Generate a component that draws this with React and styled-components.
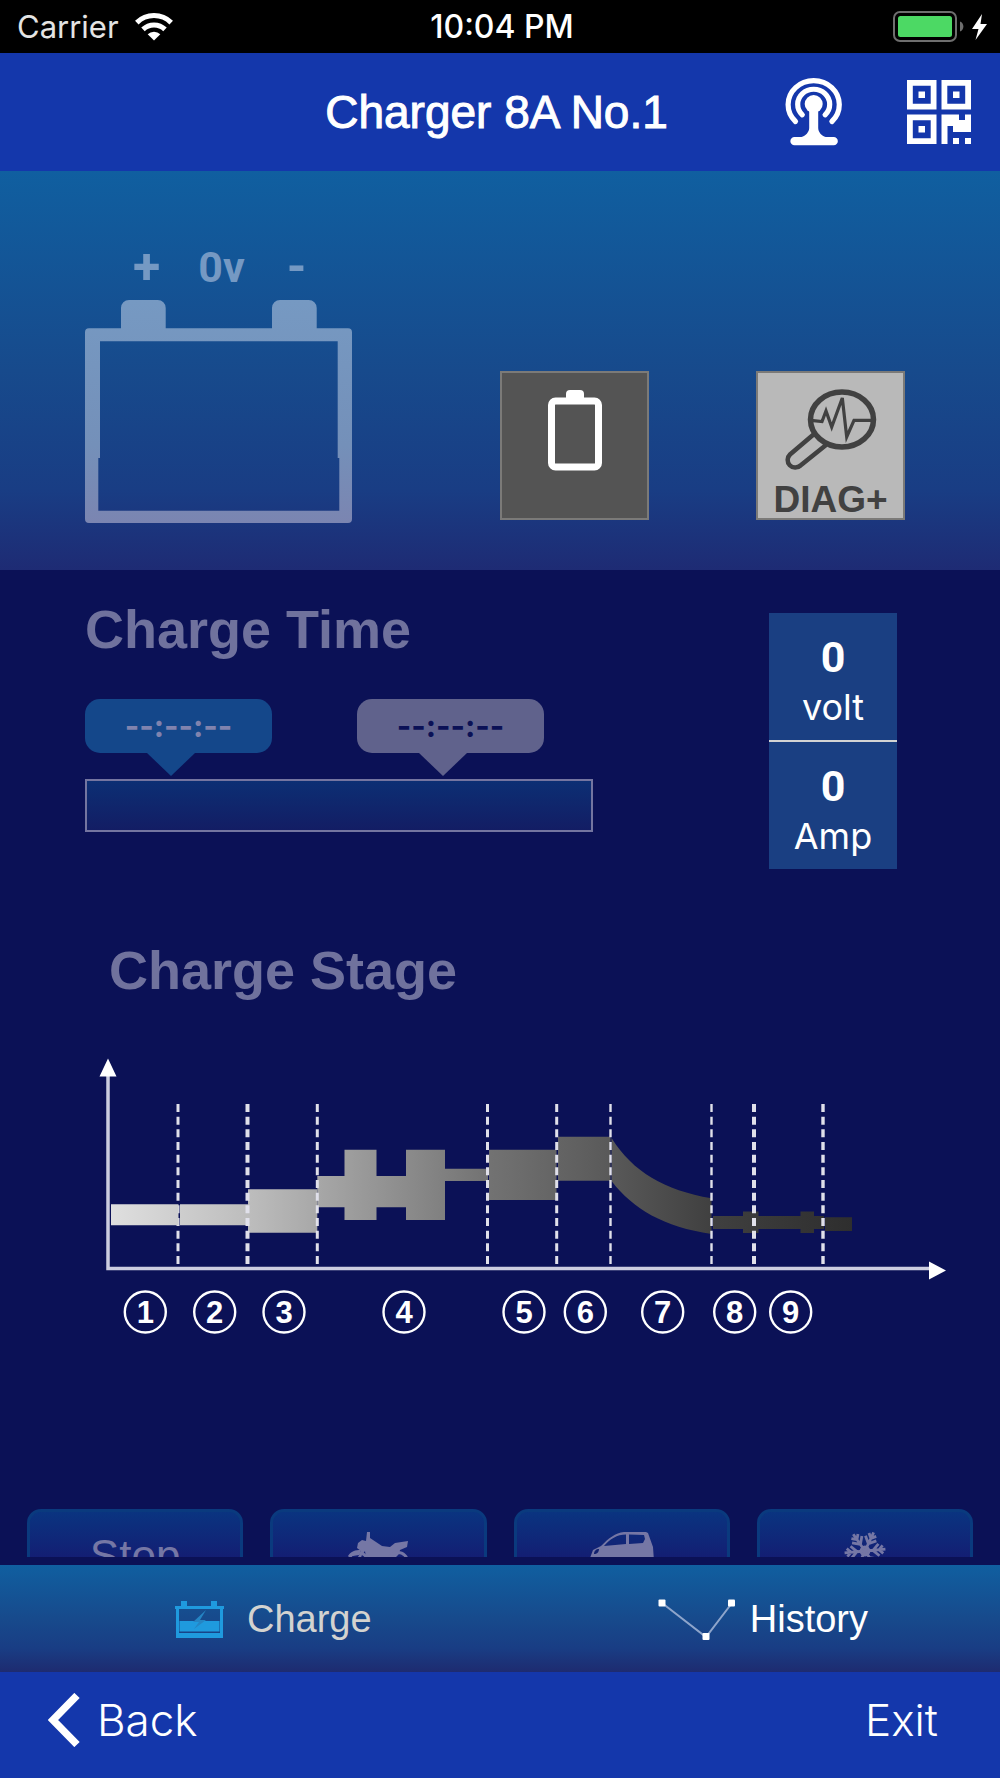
import styled, { createGlobalStyle } from "styled-components";

const GlobalStyle = createGlobalStyle`
  * {
    box-sizing: border-box;
  }

  body {
    margin: 0;
    background: #0b1156;
    font-family: "Liberation Sans", Arial, sans-serif;
  }

  button {
    padding: 0;
    border: 0;
    background: none;
    color: inherit;
    font: inherit;
    cursor: pointer;
  }

  svg {
    display: block;
    flex-shrink: 0;
  }
`;

const Screen = styled.div`
  display: flex;
  flex-direction: column;
  min-height: 100vh;
  color: white;
`;

const StatusBar = styled.div`
  display: grid;
  grid-template-columns: 1fr auto 1fr;
  align-items: center;
  height: 53px;
  padding: 0 13px 0 17px;
  background: black;
  font-family: Inter, sans-serif;
  font-size: 31px;

  .carrier {
    display: flex;
    align-items: center;
    gap: 16px;
    color: #e4e4e4;
  }

  .time {
    font-size: 32px;
    font-weight: 500;
  }

  .power {
    display: flex;
    align-items: center;
    justify-content: flex-end;
    gap: 8px;
  }
`;

const Header = styled.header`
  display: grid;
  grid-template-columns: 1fr auto 1fr;
  align-items: center;
  height: 118px;
  padding: 0 29px 0 22px;
  background: #1437ab;

  h1 {
    grid-column: 2;
    margin: 0;
    font-size: 46px;
    font-weight: 400;
    -webkit-text-stroke: 1px white;
  }

  .actions {
    display: flex;
    align-items: center;
    justify-content: flex-end;
    gap: 64px;
  }
`;

const Hero = styled.section`
  display: flex;
  align-items: flex-end;
  justify-content: space-between;
  padding: 71px 95px 47px 85px;
  background: linear-gradient(#105fa0, #174a8c 50%, #193d84 80%, #1e2b74);
`;

const BatteryLabels = styled.div`
  display: grid;
  grid-template-columns: repeat(3, 75px);
  justify-content: center;
  height: 58px;
  padding-left: 6px;
  color: #7599c3;
  font-family: Roboto, sans-serif;
  font-size: 43px;
  font-weight: 700;
  line-height: 50px;
  text-align: center;
`;

const Terminal = styled.span`
  font-size: 50px;
`;

const TileGroup = styled.div`
  display: flex;
  gap: 107px;
  padding-bottom: 3px;
`;

const Tile = styled.button`
  && {
    display: flex;
    flex-direction: column;
    align-items: center;
    width: 149px;
    height: 149px;
    padding-top: 16px;
    border: 2px solid #7b7a78;
    background: ${({ $light }) => ($light ? "#b9b9b9" : "#545454")};
    color: #414141;
    font-size: 37px;
    font-weight: 700;
    line-height: 36px;
  }

  svg {
    margin-bottom: 11px;
  }
`;

const Main = styled.main`
  flex: 1;
  padding-top: 29px;
  background: #0b1156;
`;

const TimeSection = styled.section`
  display: flex;
  align-items: flex-start;
  justify-content: space-between;
  padding: 0 103px 0 85px;
`;

const Heading = styled.h2`
  margin: 0;
  color: #70729d;
  font-size: 54px;
  font-weight: 700;
  line-height: 60px;
`;

const Bubbles = styled.div`
  display: flex;
  gap: 85px;
  margin-top: 40px;
`;

const Bubble = styled.div`
  color: ${({ $color }) => $color};
  font-family: Inter, sans-serif;
  font-size: 31px;
  font-weight: 700;
  line-height: 54px;
  text-align: center;

  span {
    display: block;
    width: 187px;
    height: 54px;
    border-radius: 15px;
    background: ${({ $fill }) => $fill};
  }

  &::after {
    content: "";
    display: block;
    width: 48px;
    height: 23px;
    margin-left: 62px;
    background: ${({ $fill }) => $fill};
    clip-path: polygon(0 0, 100% 0, 50% 100%);
  }
`;

const ProgressTrack = styled.div`
  width: 508px;
  height: 53px;
  margin-top: 3px;
  border: 2px solid #7475a0;
  background: linear-gradient(#0c2f74, #131d64);
`;

const Meter = styled.dl`
  display: flex;
  flex-direction: column-reverse;
  width: 128px;
  height: 127px;
  margin: 0;
  padding: 19px 0 8px;
  background: #1a3f82;
  line-height: 50px;
  text-align: center;

  dt {
    font-family: Inter, sans-serif;
    font-size: 36px;
  }

  dd {
    margin: 0;
    font-family: Roboto, sans-serif;
    font-size: 43px;
    font-weight: 700;
  }
`;

const Meters = styled.div`
  display: grid;
  gap: 2px;
  margin-top: 14px;
  background: #d3d3d3;
`;

const StageSection = styled.section`
  margin-top: 71px;

  ${Heading} {
    margin-bottom: 50px;
    padding-left: 109px;
  }

  svg {
    width: 100%;
    height: auto;
  }

  text {
    fill: white;
    font-size: 31px;
    font-weight: 700;
    text-anchor: middle;
  }
`;

// Only the top edge of the mode buttons shows above the tab bar
const ModeRow = styled.div`
  display: grid;
  grid-template-columns: repeat(4, 1fr);
  gap: 27px;
  height: 48px;
  margin: 159px 27px 8px;
  overflow: hidden;
`;

const ModeButton = styled.button`
  && {
    display: flex;
    align-items: flex-start;
    justify-content: center;
    height: 96px;
    padding-top: 20px;
    border: 3px solid #0a3a7e;
    border-radius: 14px;
    background: linear-gradient(#0a3480, #141c72 50px);
    color: #7577a5;
    font-size: 44px;
    line-height: 48px;
  }
`;

const TabBar = styled.nav`
  display: flex;
  align-items: center;
  justify-content: space-between;
  height: 107px;
  padding: 2px 132px 0 175px;
  background: linear-gradient(#105fa0, #174a8c 50%, #193d84 78%, #1e2b70);
`;

const Tab = styled.a`
  display: flex;
  align-items: center;
  gap: ${({ $gap }) => $gap};
  color: ${({ $active }) => ($active ? "#d3d3d0" : "white")};
  font-size: 38px;
  text-decoration: none;
`;

const Footer = styled.footer`
  display: flex;
  align-items: center;
  justify-content: space-between;
  height: 106px;
  padding: 0 62px 10px 48px;
  background: #1437ab;

  button {
    display: flex;
    align-items: center;
    gap: 17px;
    font-family: Inter, sans-serif;
    font-size: 44px;
    font-weight: 300;
  }
`;

const WifiIcon = () => (
  <svg width="38" height="28" viewBox="0 0 38 28" fill="none" stroke="white" strokeWidth="5">
    <path d="M1.8 9.6a24.5 24.5 0 0 1 34.4 0" />
    <path d="M8 16.4a15.8 15.8 0 0 1 22 0" />
    <path d="M12.7 21.2a9 9 0 0 1 12.6 0L19 27.5Z" fill="white" stroke="none" />
  </svg>
);

const PowerIcon = () => (
  <svg width="71" height="31" viewBox="0 0 71 31">
    <rect x="1" y="1" width="62" height="29" rx="6" fill="none" stroke="#6e6e6e" strokeWidth="2" />
    <rect x="5" y="5" width="54" height="21" rx="2.5" fill="#4cd964" />
    <path d="M67 10.5c4.500 1.500 4.500 8.500 0 10Z" fill="#6e6e6e" />
  </svg>
);

const BoltIcon = () => (
  <svg width="15" height="26" viewBox="0 0 15 26">
    <path d="M10 0 0 15h6.500L3.500 26 15 10H8.500Z" fill="white" />
  </svg>
);

const AntennaIcon = () => (
  <svg width="58" height="68" viewBox="0 0 58 68" fill="none" stroke="white" strokeWidth="5.200" strokeLinecap="round">
    <path d="M10.500 43.500A25.600 24 0 1 1 46.900 43.500" />
    <path d="M17.300 36.800A16 15 0 1 1 40.100 36.800" />
    <g fill="white" stroke="none">
      <circle cx="28.700" cy="26" r="9" />
      <path d="M24.200 26h9v24c0 4 3.500 8 7.500 9h8a4 4 0 0 1 0 8.300H9.500a4 4 0 0 1 0-8.300h7c4-1 7.700-5 7.700-9Z" />
    </g>
  </svg>
);

const QrIcon = () => (
  <svg width="64" height="64" viewBox="0 0 64 64" fill="white">
    {[
      [0, 0],
      [34.5, 0],
      [0, 34.5],
    ].map(([x, y]) => (
      <g key={`${x}-${y}`} transform={`translate(${x} ${y})`}>
        <path d="M0 0h29.500v29.500H0ZM5.800 5.800v17.900h17.900V5.800Z" fillRule="evenodd" />
        <rect x="11.500" y="11.500" width="6.500" height="6.500" />
      </g>
    ))}
    <path d="M34.500 34.500H52V40h6v-5.500h6V52H46v-6h-5.500v18h-6Z" />
    <path d="M46 58h6v6h-6ZM58 58h6v6h-6Z" />
  </svg>
);

const BatteryDrawing = () => (
  <svg width="267" height="223" viewBox="0 0 267 223">
    <defs>
      <linearGradient id="battery" x1="0" y1="0" x2="0" y2="1">
        <stop offset="0" stopColor="#7699c2" />
        <stop offset="0.650" stopColor="#7490b9" />
        <stop offset="1" stopColor="#7b85b1" />
      </linearGradient>
    </defs>
    <path
      fill="url(#battery)"
      fillRule="evenodd"
      d="M4 28.300H36V8a8 8 0 0 1 8-8h28.700a8 8 0 0 1 8 8v20.300H187V8a8 8 0 0 1 8-8h28.700a8 8 0 0 1 8 8v20.300H263a4 4 0 0 1 4 4V219a4 4 0 0 1-4 4H4a4 4 0 0 1-4-4V32.300a4 4 0 0 1 4-4ZM15 41.300V158h-1.700v52.700h241V158h-1.600V41.300Z"
    />
  </svg>
);

const EmptyCellIcon = () => (
  <svg width="54" height="82" viewBox="0 0 54 82">
    <rect x="3.500" y="12" width="47" height="66" rx="4" fill="none" stroke="white" strokeWidth="7" />
    <path d="M18 10V5a4 4 0 0 1 4-4h10a4 4 0 0 1 4 4v5Z" fill="white" />
  </svg>
);

const DiagnosticIcon = () => (
  <svg width="92" height="82" viewBox="0 0 92 82" fill="none" stroke="#414141" strokeWidth="4.500">
    <ellipse cx="57" cy="30.500" rx="31.500" ry="27.500" strokeWidth="5.500" />
    <path d="M26 31.300 37 32.500 41 22 46.700 38 57.300 9 61.700 48 69 31.300H88" strokeWidth="3.200" />
    <path d="M28.500 45.500 5 65.500a7.500 7.500 0 0 0 10.500 11L41 56" />
  </svg>
);

const MotorcycleIcon = () => (
  <svg width="62" height="42" viewBox="0 0 62 42" fill="#7577a5">
    <path d="M20 0h3v6l6 4 6 4 8 1 5-4 13-2-1 6-7 3-1 4-3 3-2 10H22l-3-9-1-7-3 4-3 7-3-1 5-10-4-3 1-5 4-3 4 1Z" />
    <g fill="none" stroke="#7577a5" strokeWidth="3">
      <circle cx="11" cy="30" r="9.500" />
      <circle cx="51" cy="30" r="9.500" />
    </g>
    <path d="M1 24c3-5 7-6 13-6l-2 5-6 1Z" />
  </svg>
);

const CarIcon = () => (
  <svg width="64" height="44" viewBox="0 0 64 44">
    <path
      fill="#7577a5"
      fillRule="evenodd"
      d="M0 26 3 18l8-4C19 6 25 1 34 0h22l2 1 5 14 1 14v10H0ZM14 14l22-2V2.500C27 2.500 20 7 14 14ZM39 2.500V12l14-1 2-4-1-4Z"
    />
    <path d="M4 22c0-3 2-5 5-5 0 3-2 5-5 5Z" fill="#11206f" />
    <path d="M6 32a7 7 0 0 1 14 0ZM47 32a7 7 0 0 1 14 0Z" fill="#141c72" />
  </svg>
);

const SnowflakeIcon = () => (
  <svg width="42" height="38" viewBox="-21 -19 42 38" fill="none" stroke="#7577a5" strokeWidth="2.800">
    {[-5, 55, 115, 175, 235, 295].map((angle) => (
      <path key={angle} transform={`rotate(${angle})`} d="M0 0H20.500M8 0 14-6M8 0 14 6M14 0 18-4M14 0 18 4" />
    ))}
    <circle r="4" />
  </svg>
);

const ChargeIcon = () => (
  <svg width="49" height="38" viewBox="0 0 49 38" fill="#1f9ade">
    <path d="M0 5h6V0h6v5h24V0h6v5h7v3h-1v29H1V8H0ZM4 8v24h41V8Z" fillRule="evenodd" />
    <path d="M4.500 20H44.500v10.500H4.500Z" />
    <path d="M31 9 18 21h6l-5 7 12-9h-6Z" fill="#2585c4" />
  </svg>
);

const HistoryIcon = () => (
  <svg width="78" height="42" viewBox="0 0 78 42" fill="white">
    <path d="M4 4 48 38 74 4" fill="none" stroke="#8ea5cb" strokeWidth="2" />
    <rect x="0.500" y="0.500" width="7" height="7" rx="1" />
    <rect x="44.500" y="34" width="7" height="7" rx="1" />
    <rect x="70" y="0.500" width="7" height="7" rx="1" />
  </svg>
);

const BackIcon = () => (
  <svg width="32" height="54" viewBox="0 0 32 54">
    <path d="M29 2.500 5 27 29 51.500" fill="none" stroke="white" strokeWidth="7.500" />
  </svg>
);

const dividers = [
  { x: 178, width: 3 },
  { x: 247.5, width: 4 },
  { x: 317.3, width: 3 },
  { x: 487.5, width: 3 },
  { x: 556.7, width: 3 },
  { x: 610.5, width: 2.4 },
  { x: 711.5, width: 2.4 },
  { x: 754, width: 4 },
  { x: 823, width: 3.4 },
];

const stageCenters = [145.3, 214.7, 284, 404, 524, 585.3, 662.7, 734.7, 790.7];

const StageChart = () => (
  <svg viewBox="0 0 1000 300" role="img" aria-label="Charge stages 1 to 9">
    <defs>
      <linearGradient id="stages" gradientUnits="userSpaceOnUse" x1="111" y1="0" x2="852" y2="0">
        <stop offset="0" stopColor="#dfdfdf" />
        <stop offset="0.190" stopColor="#bcbcbc" />
        <stop offset="0.500" stopColor="#747474" />
        <stop offset="0.670" stopColor="#5a5a5a" />
        <stop offset="0.810" stopColor="#404040" />
        <stop offset="1" stopColor="#2e2e2e" />
      </linearGradient>
    </defs>
    <g stroke="#e0e0ea" strokeDasharray="8 4.670">
      <line x1={dividers[0].x} y1="54" x2={dividers[0].x} y2="214" strokeWidth={dividers[0].width} />
    </g>
    <g fill="url(#stages)">
      <path d="M111 154.300h67.500v21H111ZM180 154.300h68v21h-68Z" />
      <path d="M248 139.300h69.300v43.400H248Z" />
      <path d="M317.300 126h27.200V99.700h32V126h29.500V99.700h39v19H488V131h-43v39h-39v-12.700h-29.500V170h-32v-12.700h-27.200Z" />
      <path d="M489 99.700h67.500V150H489ZM558 86.700h52.500v44H558Z" />
      <path d="M611.500 88C633 122 664 140 711.500 148.300V184C664 177 633 159 611.500 131Z" />
      <path d="M713 166h30v-4.500h15.500v4.500h42v-4.500H814v4.500h10v13h-10v4h-13.500v-4h-42v4H743v-4h-30ZM825 167.300h27V181h-27Z" />
    </g>
    <g stroke="#e0e0ea" strokeDasharray="8 4.670">
      {dividers.slice(1).map(({ x, width }) => (
        <line key={x} x1={x} y1="54" x2={x} y2="214" strokeWidth={width} />
      ))}
    </g>
    <path d="M108 24V218.500H932" fill="none" stroke="#cccde0" strokeWidth="3.500" />
    <path d="M108 8.500 116.500 26.500h-17ZM946 220.500 929 211.500v18Z" fill="white" />
    {stageCenters.map((x, index) => (
      <g key={x}>
        <circle cx={x} cy="262" r="20.500" fill="none" stroke="white" strokeWidth="2.400" />
        <text x={x} y="273">
          {index + 1}
        </text>
      </g>
    ))}
  </svg>
);

const modes = [
  { id: "stop", label: "Stop" },
  { id: "motorcycle", icon: <MotorcycleIcon /> },
  { id: "car", icon: <CarIcon /> },
  { id: "snow", icon: <SnowflakeIcon /> },
];

const App = () => {
  return (
    <Screen>
      <GlobalStyle />
      <StatusBar>
        <div className="carrier">
          Carrier
          <WifiIcon />
        </div>
        <div className="time">10:04 PM</div>
        <div className="power">
          <PowerIcon />
          <BoltIcon />
        </div>
      </StatusBar>

      <Header>
        <h1>Charger 8A No.1</h1>
        <div className="actions">
          <button aria-label="Connect">
            <AntennaIcon />
          </button>
          <button aria-label="Scan code">
            <QrIcon />
          </button>
        </div>
      </Header>

      <Hero>
        <div>
          <BatteryLabels>
            <Terminal>+</Terminal>
            <span>0v</span>
            <Terminal>-</Terminal>
          </BatteryLabels>
          <BatteryDrawing />
        </div>
        <TileGroup>
          <Tile aria-label="Battery">
            <EmptyCellIcon />
          </Tile>
          <Tile $light>
            <DiagnosticIcon />
            DIAG+
          </Tile>
        </TileGroup>
      </Hero>

      <Main>
        <TimeSection>
          <div>
            <Heading>Charge Time</Heading>
            <Bubbles>
              <Bubble $fill="#14478a" $color="#8083ae">
                <span>--:--:--</span>
              </Bubble>
              <Bubble $fill="#60628c" $color="#0b1156">
                <span>--:--:--</span>
              </Bubble>
            </Bubbles>
            <ProgressTrack />
          </div>
          <Meters>
            <Meter>
              <dt>volt</dt>
              <dd>0</dd>
            </Meter>
            <Meter>
              <dt>Amp</dt>
              <dd>0</dd>
            </Meter>
          </Meters>
        </TimeSection>

        <StageSection>
          <Heading>Charge Stage</Heading>
          <StageChart />
        </StageSection>

        <ModeRow>
          {modes.map(({ id, label, icon }) => (
            <ModeButton key={id} aria-label={id}>
              {label || icon}
            </ModeButton>
          ))}
        </ModeRow>
      </Main>

      <TabBar>
        <Tab href="#charge" $active $gap="23px">
          <ChargeIcon />
          Charge
        </Tab>
        <Tab href="#history" $gap="14px">
          <HistoryIcon />
          History
        </Tab>
      </TabBar>

      <Footer>
        <button>
          <BackIcon />
          Back
        </button>
        <button>Exit</button>
      </Footer>
    </Screen>
  );
};

export default App;
